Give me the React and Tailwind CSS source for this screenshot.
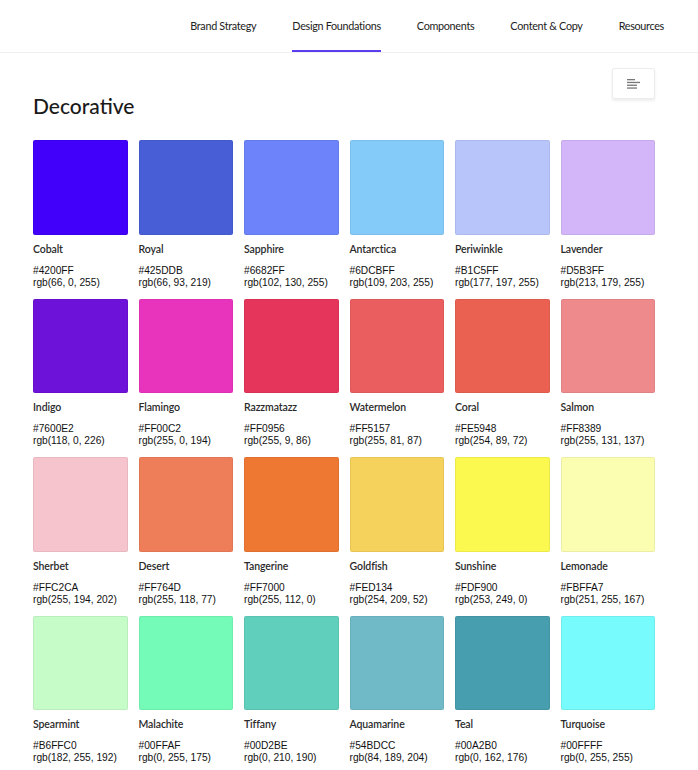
import React from "react";

// shown colours are the screenshot's rendered values, labels are the brand values
const swatches = [
  ["Cobalt", "#4200FF", "rgb(66, 0, 255)", "#4000f9"],
  ["Royal", "#425DDB", "rgb(66, 93, 219)", "#485ed6"],
  ["Sapphire", "#6682FF", "rgb(102, 130, 255)", "#6c83f9"],
  ["Antarctica", "#6DCBFF", "rgb(109, 203, 255)", "#85cbfa"],
  ["Periwinkle", "#B1C5FF", "rgb(177, 197, 255)", "#b7c5fb"],
  ["Lavender", "#D5B3FF", "rgb(213, 179, 255)", "#d3b5f9"],
  ["Indigo", "#7600E2", "rgb(118, 0, 226)", "#6d12d9"],
  ["Flamingo", "#FF00C2", "rgb(255, 0, 194)", "#e834bd"],
  ["Razzmatazz", "#FF0956", "rgb(255, 9, 86)", "#e6355b"],
  ["Watermelon", "#FF5157", "rgb(255, 81, 87)", "#eb5e5f"],
  ["Coral", "#FE5948", "rgb(254, 89, 72)", "#ea6152"],
  ["Salmon", "#FF8389", "rgb(255, 131, 137)", "#ee8a8c"],
  ["Sherbet", "#FFC2CA", "rgb(255, 194, 202)", "#f6c4cc"],
  ["Desert", "#FF764D", "rgb(255, 118, 77)", "#ee7e5a"],
  ["Tangerine", "#FF7000", "rgb(255, 112, 0)", "#ee7731"],
  ["Goldfish", "#FED134", "rgb(254, 209, 52)", "#f5d25b"],
  ["Sunshine", "#FDF900", "rgb(253, 249, 0)", "#fbf84f"],
  ["Lemonade", "#FBFFA7", "rgb(251, 255, 167)", "#fbfdb0"],
  ["Spearmint", "#B6FFC0", "rgb(182, 255, 192)", "#c6fcc8"],
  ["Malachite", "#00FFAF", "rgb(0, 255, 175)", "#74fbb8"],
  ["Tiffany", "#00D2BE", "rgb(0, 210, 190)", "#60cfbc"],
  ["Aquamarine", "#54BDCC", "rgb(84, 189, 204)", "#70bac8"],
  ["Teal", "#00A2B0", "rgb(0, 162, 176)", "#479eae"],
  ["Turquoise", "#00FFFF", "rgb(0, 255, 255)", "#77fbfc"],
];

const navItems = ["Brand Strategy", "Design Foundations", "Components", "Content & Copy", "Resources"];

function Swatch({ name, hex, rgb, shown }) {
  return (
    <div>
      <div className="aspect-square rounded-[2px] border border-black/[0.06]" style={{ backgroundColor: shown }} />
      <div className="mt-[7px] text-[10.5px] leading-[14px] tracking-[-0.1px] font-semibold text-[#2a2a2a]">{name}</div>
      <div className="mt-[9px] text-[10.2px] leading-[12px] text-[#111] font-['Liberation_Sans',Arial,sans-serif]">
        <div>{hex}</div>
        <div>{rgb}</div>
      </div>
    </div>
  );
}

export default function App() {
  return (
    <div className="min-h-[770px] bg-white font-['Lato','Noto_Sans',sans-serif]">
      <nav className="h-[53px] border-b border-[#f0f0f0] flex justify-end pr-[34px] gap-[36px]">
        {navItems.map((item) => (
          <a
            key={item}
            className={
              "flex items-center pt-[3px] text-[10.8px] tracking-[-0.3px] text-[#222] border-b-2 " +
              (item === "Design Foundations" ? "border-[#5b3cf0]" : "border-transparent")
            }
          >
            {item}
          </a>
        ))}
      </nav>

      <main className="pl-[33px] pr-[43px] pt-[15px]">
        <div className="flex justify-between items-start">
          <h1 className="mt-[24px] text-[21px] leading-[28px] font-medium text-[#1a1a1a]">Decorative</h1>
          <button className="w-[43px] h-[31px] bg-white border border-[#ececec] rounded-[2px] shadow-[0_2px_3px_rgba(0,0,0,0.07)] flex items-center justify-center">
            <svg width="13" height="10" viewBox="0 0 13 10">
              <rect x="0" y="0" width="8" height="1.3" fill="#777" />
              <rect x="0" y="2.8" width="13" height="1.3" fill="#777" />
              <rect x="0" y="5.6" width="10" height="1.3" fill="#777" />
              <rect x="0" y="8.4" width="10" height="1.3" fill="#777" />
            </svg>
          </button>
        </div>

        <div className="mt-[20px] grid grid-cols-6 gap-x-[11px] gap-y-[10px]">
          {swatches.map(([name, hex, rgb, shown]) => (
            <Swatch key={name} name={name} hex={hex} rgb={rgb} shown={shown} />
          ))}
        </div>
      </main>
    </div>
  );
}
